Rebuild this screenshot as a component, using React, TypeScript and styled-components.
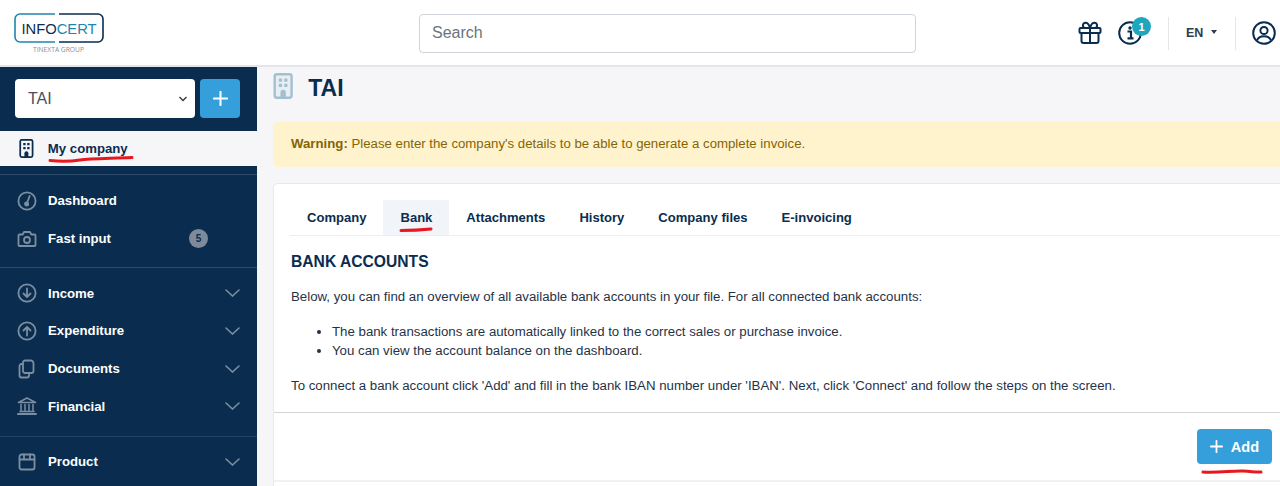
import styled, { createGlobalStyle } from 'styled-components'
import { ReactNode } from 'react'

const NAVY = '#0a2d4f'
const BLUE = '#349fda'
const TEXT = '#1f3348'

const GlobalStyle = createGlobalStyle`
  html, body {
    margin: 0;
    padding: 0;
    height: 486px;
    overflow: hidden;
    background: #f6f6f9;
    font-family: "Liberation Sans", Arial, sans-serif;
  }
  * {
    box-sizing: border-box;
  }
`

const Page = styled.div`
  width: 1280px;
  height: 486px;
  overflow: hidden;
  display: flex;
  flex-direction: column;
`

const Header = styled.header`
  height: 67px;
  flex: none;
  background: #fff;
  border-bottom: 2px solid #e4e4ec;
  display: flex;
  align-items: center;
  padding: 1px 0 0 14px;
`

const LogoWrap = styled.div`
  width: 405px;
  flex: none;
  display: flex;
  margin-top: 2px;
`

const SearchBox = styled.div`
  width: 497px;
  height: 39px;
  border: 1px solid #ced4da;
  border-radius: 4px;
  display: flex;
  align-items: center;
  padding-left: 12px;
  font-size: 16px;
  color: #6c757d;
`

const HeaderRight = styled.div`
  margin-left: auto;
  display: flex;
  align-items: center;
  height: 34px;
`

const HeaderIcon = styled.div<{ $w: number; $pl?: number }>`
  position: relative;
  width: ${p => p.$w}px;
  padding-left: ${p => p.$pl ?? 0}px;
  display: flex;
`

const NotifyBadge = styled.span`
  position: absolute;
  top: -4px;
  left: 14px;
  width: 19px;
  height: 19px;
  border-radius: 50%;
  background: #1fa6bd;
  color: #fff;
  font-size: 11px;
  font-weight: 700;
  display: flex;
  align-items: center;
  justify-content: center;
`

const HeaderDivider = styled.div`
  width: 1px;
  height: 33px;
  background: #e6e6e6;
`

const LangButton = styled.div`
  width: 66px;
  display: flex;
  align-items: center;
  padding-left: 17px;
  font-size: 12.5px;
  font-weight: 700;
  color: #2c3e50;
  &::after {
    content: '';
    margin: -3px 0 0 8px;
    border-top: 4px solid #2c3e50;
    border-left: 3.5px solid transparent;
    border-right: 3.5px solid transparent;
  }
`

const Body = styled.div`
  flex: 1;
  display: flex;
  min-height: 0;
`

const Sidebar = styled.aside`
  width: 257px;
  flex: none;
  background: ${NAVY};
  display: flex;
  flex-direction: column;
`

const CompanyPicker = styled.div`
  height: 64px;
  padding: 12px 17px 0 15px;
  display: flex;
  gap: 5px;
`

const SelectBox = styled.div`
  flex: 1;
  height: 39px;
  background: #fff;
  border-radius: 4px;
  display: flex;
  align-items: center;
  justify-content: space-between;
  padding: 0 7px 0 13px;
  font-size: 16px;
  color: #495057;
`

const PlusButton = styled.div`
  width: 40px;
  height: 39px;
  background: ${BLUE};
  border-radius: 4px;
  display: flex;
  align-items: center;
  justify-content: center;
`

const ActiveItem = styled.div`
  position: relative;
  height: 35px;
  margin-bottom: 8px;
  background: #f6f6f9;
  display: flex;
  align-items: center;
  padding-left: 19px;
  gap: 14px;
  font-size: 13.2px;
  font-weight: 700;
  color: ${NAVY};
`

const NavGroup = styled.div<{ $pad: string; $line?: string }>`
  padding: ${p => p.$pad};
  border-top: 1px solid ${p => p.$line ?? '#2a4b69'};
  display: flex;
  flex-direction: column;
`

const NavItem = styled.div`
  height: 37.7px;
  display: flex;
  align-items: center;
  padding-left: 17px;
  color: #fff;
  font-size: 13.2px;
  font-weight: 700;
`

const NavIcon = styled.span`
  width: 31px;
  flex: none;
  display: flex;
`

const NavLabel = styled.span`
  flex: 1;
`

const CountBadge = styled.span`
  width: 19px;
  height: 19px;
  margin-right: 49px;
  border-radius: 50%;
  background: #7d8a9b;
  color: #0a2d4f;
  font-size: 10px;
  display: flex;
  align-items: center;
  justify-content: center;
`

const Chevron = styled.svg`
  margin-right: 17px;
`

const Main = styled.main`
  flex: 1;
  min-width: 0;
  padding-left: 16px;
  overflow: hidden;
`

const TitleRow = styled.div`
  height: 55px;
  display: flex;
  align-items: flex-start;
  padding-top: 6px;
  gap: 15px;
`

const Title = styled.h1`
  margin: 0;
  font-size: 23px;
  line-height: 30px;
  font-weight: 700;
  color: ${NAVY};
`

const WarningBox = styled.div`
  width: 1020px;
  height: 45px;
  background: #fff3cd;
  border-radius: 5px 0 0 5px;
  display: flex;
  align-items: center;
  padding: 0 0 2px 18px;
  font-size: 13.23px;
  color: #856404;
`

const Card = styled.section`
  width: 1020px;
  height: 320px;
  margin-top: 16px;
  background: #fff;
  border: 1px solid #e8e8ee;
  border-right: 0;
  border-radius: 5px 0 0 0;
`

const CardBody = styled.div`
  padding: 16px 0 0 17px;
  height: 229px;
  border-bottom: 1px solid #d3d5d9;
`

const Tabs = styled.div`
  height: 36px;
  margin-left: -1px;
  display: flex;
  border-bottom: 1px solid #eceef2;
`

const Tab = styled.div<{ $active?: boolean }>`
  position: relative;
  padding: 0 17px;
  display: flex;
  align-items: center;
  font-size: 13.05px;
  font-weight: 700;
  color: ${NAVY};
  background: ${p => (p.$active ? '#f1f4f8' : 'transparent')};
`

const SectionTitle = styled.h2`
  margin: 16px 0 0;
  font-size: 15.65px;
  line-height: 20px;
  font-weight: 700;
  color: ${NAVY};
`

const Paragraph = styled.p`
  margin: 16px 0 0;
  font-size: 13.25px;
  line-height: 18px;
  color: ${TEXT};
`

const BulletList = styled.ul`
  margin: 17px 0 0;
  padding-left: 41px;
  font-size: 13.25px;
  line-height: 18.5px;
  color: ${TEXT};
  & + p {
    margin-top: 17px;
  }
`

const Actions = styled.div`
  height: 69px;
  border-bottom: 2px solid #f1f1f5;
  display: flex;
  justify-content: flex-end;
  padding: 16px 21px 0 0;
`

const AddButton = styled.div`
  position: relative;
  width: 75px;
  height: 35px;
  background: ${BLUE};
  border-radius: 4px;
  display: flex;
  align-items: center;
  justify-content: center;
  gap: 8px;
  color: #fff;
  font-size: 14.6px;
  font-weight: 700;
`

const Scribble = styled.svg<{ $left: number; $top: number }>`
  position: absolute;
  left: ${p => p.$left}px;
  top: ${p => p.$top}px;
  overflow: visible;
`

const RedStroke = ({ left, top, width, d }: { left: number; top: number; width: number; d: string }) => (
  <Scribble $left={left} $top={top} width={width} height="8" viewBox={`0 0 ${width} 8`} fill="none">
    <path d={d} stroke="#e8181f" strokeWidth="3" strokeLinecap="round" />
  </Scribble>
)

const Logo = () => (
  <svg width="90" height="42" viewBox="0 0 90 42" fill="none">
    <path d="M41 1H6a5 5 0 0 0-5 5v18a5 5 0 0 0 5 5h35" stroke="#1f86ab" strokeWidth="1.6" />
    <path d="M45 1h39a5 5 0 0 1 5 5v18a5 5 0 0 1-5 5H45" stroke="#0a2d4f" strokeWidth="1.6" />
    <text x="7.5" y="21" fontFamily="'Liberation Sans', sans-serif" fontSize="15.5" textLength="75" lengthAdjust="spacingAndGlyphs">
      <tspan fill="#0a2d4f">INFO</tspan><tspan fill="#1f86ab">CERT</tspan>
    </text>
    <text x="19" y="38.5" fontFamily="'Open Sans', sans-serif" fontSize="6.5" fill="#8a8f94" textLength="51" lengthAdjust="spacingAndGlyphs">
      TINEXTA GROUP
    </text>
  </svg>
)

const Gift = () => (
  <svg width="24" height="24" viewBox="0 0 24 24" fill="none" stroke={NAVY} strokeWidth="2" strokeLinejoin="round" strokeLinecap="round">
    <rect x="1.5" y="7" width="21" height="5" rx="1" />
    <path d="M3.5 12v8a2 2 0 0 0 2 2h13a2 2 0 0 0 2-2v-8M12 7v15" />
    <path d="M12 7H7.5a2.600 2.600 0 0 1 0-5.200C10.500 1.800 12 7 12 7zM12 7h4.500a2.600 2.600 0 0 0 0-5.200C13.500 1.800 12 7 12 7z" />
  </svg>
)

const InfoCircle = () => (
  <svg width="24" height="24" viewBox="0 0 24 24" fill="none">
    <circle cx="12" cy="12" r="10.800" stroke={NAVY} strokeWidth="2" />
    <circle cx="12" cy="7" r="1.700" fill={NAVY} />
    <path d="M9.500 10.500H13V17M9.500 17.300h6" stroke={NAVY} strokeWidth="2.200" />
  </svg>
)

const UserCircle = () => (
  <svg width="24" height="24" viewBox="0 0 24 24" fill="none" stroke={NAVY} strokeWidth="2">
    <circle cx="12" cy="12" r="10.800" />
    <circle cx="12" cy="9.500" r="3.600" />
    <path d="M5 19.500c1-3 3.500-4.200 7-4.200s6 1.200 7 4.200" />
  </svg>
)

const Building = ({ color, size, windows }: { color: string; size: number; windows: string }) => (
  <svg width={size * 0.78} height={size} viewBox="0 0 18 24" fill="none">
    <rect x="1.200" y="1.200" width="15.600" height="21.600" rx="2" stroke={color} strokeWidth="2.200" fill={windows === 'none' ? 'none' : '#e8eef3'} />
    <path d="M5 5h3v3H5zM10 5h3v3h-3zM5 10h3v3H5zM10 10h3v3h-3z" fill={windows === 'none' ? color : windows} />
    <path d="M6.500 23v-5a2.500 2.500 0 0 1 5 0v5z" fill={windows === 'none' ? color : windows} />
  </svg>
)

const GREY = '#7c8ea0'

const iconProps = {
  width: 20,
  height: 20,
  viewBox: '0 0 20 20',
  fill: 'none',
  stroke: GREY,
  strokeWidth: 1.8,
  strokeLinecap: 'round' as const,
  strokeLinejoin: 'round' as const
}

const GaugeIcon = () => (
  <svg {...iconProps}>
    <circle cx="10" cy="10" r="8.600" />
    <path d="M12.600 5l-2.200 6" />
    <circle cx="9.600" cy="13" r="1.600" fill={GREY} />
  </svg>
)

const CameraIcon = () => (
  <svg {...iconProps}>
    <path d="M2.500 5.500h3.200L7 3h6l1.300 2.500h3.200a1 1 0 0 1 1 1V16a1 1 0 0 1-1 1h-15a1 1 0 0 1-1-1V6.500a1 1 0 0 1 1-1z" />
    <circle cx="10" cy="11" r="3" />
  </svg>
)

const ArrowDownIcon = () => (
  <svg {...iconProps}>
    <circle cx="10" cy="10" r="8.600" />
    <path d="M10 5.500v8.500M6.500 10.500L10 14l3.500-3.500" />
  </svg>
)

const ArrowUpIcon = () => (
  <svg {...iconProps}>
    <circle cx="10" cy="10" r="8.600" />
    <path d="M10 14.500V6M6.500 9.500L10 6l3.500 3.500" />
  </svg>
)

const DocumentsIcon = () => (
  <svg {...iconProps}>
    <path d="M8 1.500h6a3 3 0 0 1 2.500 2.500v8a2 2 0 0 1-2 2H8a2 2 0 0 1-2-2V3.500a2 2 0 0 1 2-2z" />
    <path d="M6 5H4.500a2 2 0 0 0-2 2v9.500a2 2 0 0 0 2 2H10a2 2 0 0 0 2-2V14" />
  </svg>
)

const BankIcon = () => (
  <svg {...iconProps} strokeWidth={1.5}>
    <path d="M1.500 6.500L10 2l8.500 4.500zM4 8.500v6M8 8.500v6M12 8.500v6M16 8.500v6M3 15.500h14" />
    <path d="M1 18h18" strokeWidth={2} />
  </svg>
)

const BoxIcon = () => (
  <svg {...iconProps}>
    <rect x="2.500" y="2.500" width="15" height="15" rx="2" />
    <path d="M2.500 7.500h15M7 2.500v5M13 2.500v5" />
  </svg>
)

const Down = () => (
  <Chevron width="15" height="8" viewBox="0 0 15 8" fill="none" stroke={GREY} strokeWidth="1.600" strokeLinecap="round">
    <path d="M1 1l6.500 6L14 1" />
  </Chevron>
)

const Plus = ({ size }: { size: number }) => (
  <svg width={size} height={size} viewBox="0 0 16 16" stroke="#fff" strokeWidth="2.200" strokeLinecap="round">
    <path d="M8 1v14M1 8h14" />
  </svg>
)

const Item = ({ icon, label, open, badge }: { icon: ReactNode; label: string; open?: boolean; badge?: string }) => (
  <NavItem>
    <NavIcon>{icon}</NavIcon>
    <NavLabel>{label}</NavLabel>
    {badge && <CountBadge>{badge}</CountBadge>}
    {open && <Down />}
  </NavItem>
)

export default function App() {
  return (
    <Page>
      <GlobalStyle />
      <Header>
        <LogoWrap>
          <Logo />
        </LogoWrap>
        <SearchBox>Search</SearchBox>
        <HeaderRight>
          <HeaderIcon $w={40}>
            <Gift />
          </HeaderIcon>
          <HeaderIcon $w={50}>
            <InfoCircle />
            <NotifyBadge>1</NotifyBadge>
          </HeaderIcon>
          <HeaderDivider />
          <LangButton>EN</LangButton>
          <HeaderDivider />
          <HeaderIcon $w={44} $pl={16}>
            <UserCircle />
          </HeaderIcon>
        </HeaderRight>
      </Header>
      <Body>
        <Sidebar>
          <CompanyPicker>
            <SelectBox>
              TAI
              <svg width="10" height="6" viewBox="0 0 10 6" fill="none" stroke="#343a40" strokeWidth="1.400">
                <path d="M1.500 1l3.500 3.500L8.500 1" />
              </svg>
            </SelectBox>
            <PlusButton>
              <Plus size={15} />
            </PlusButton>
          </CompanyPicker>
          <ActiveItem>
            <Building color={NAVY} size={19} windows="none" />
            My company
            <RedStroke left={49} top={26} width={84} d="M1 3.500c10 1 20 1 30 -.5S60 1.500 83 .5" />
          </ActiveItem>
          <NavGroup $pad="7px 0 10px">
            <Item icon={<GaugeIcon />} label="Dashboard" />
            <Item icon={<CameraIcon />} label="Fast input" badge="5" />
          </NavGroup>
          <NavGroup $pad="6px 0 11px">
            <Item icon={<ArrowDownIcon />} label="Income" open />
            <Item icon={<ArrowUpIcon />} label="Expenditure" open />
            <Item icon={<DocumentsIcon />} label="Documents" open />
            <Item icon={<BankIcon />} label="Financial" open />
          </NavGroup>
          <NavGroup $pad="6px 0 0" $line="#25445f">
            <Item icon={<BoxIcon />} label="Product" open />
          </NavGroup>
        </Sidebar>
        <Main>
          <TitleRow>
            <Building color="#a3bfd2" size={26} windows="#a3bfd2" />
            <Title>TAI</Title>
          </TitleRow>
          <WarningBox>
            <b>Warning:</b>&nbsp;Please enter the company's details to be able to generate a complete invoice.
          </WarningBox>
          <Card>
            <CardBody>
              <Tabs>
                <Tab>Company</Tab>
                <Tab $active>
                  Bank
                  <RedStroke left={17} top={27} width={32} d="M1 3.500c10 0 20-.5 30-1.500" />
                </Tab>
                <Tab>Attachments</Tab>
                <Tab>History</Tab>
                <Tab>Company files</Tab>
                <Tab>E-invoicing</Tab>
              </Tabs>
              <SectionTitle>BANK ACCOUNTS</SectionTitle>
              <Paragraph>
                Below, you can find an overview of all available bank accounts in your file. For all connected bank accounts:
              </Paragraph>
              <BulletList>
                <li>The bank transactions are automatically linked to the correct sales or purchase invoice.</li>
                <li>You can view the account balance on the dashboard.</li>
              </BulletList>
              <Paragraph>
                To connect a bank account click 'Add' and fill in the bank IBAN number under 'IBAN'. Next, click 'Connect' and follow the steps on the screen.
              </Paragraph>
            </CardBody>
            <Actions>
              <AddButton>
                <Plus size={13} />
                Add
                <RedStroke left={5} top={40} width={60} d="M1 3c15 1 30-1.500 40-1s12 1.500 18 1" />
              </AddButton>
            </Actions>
          </Card>
        </Main>
      </Body>
    </Page>
  )
}
